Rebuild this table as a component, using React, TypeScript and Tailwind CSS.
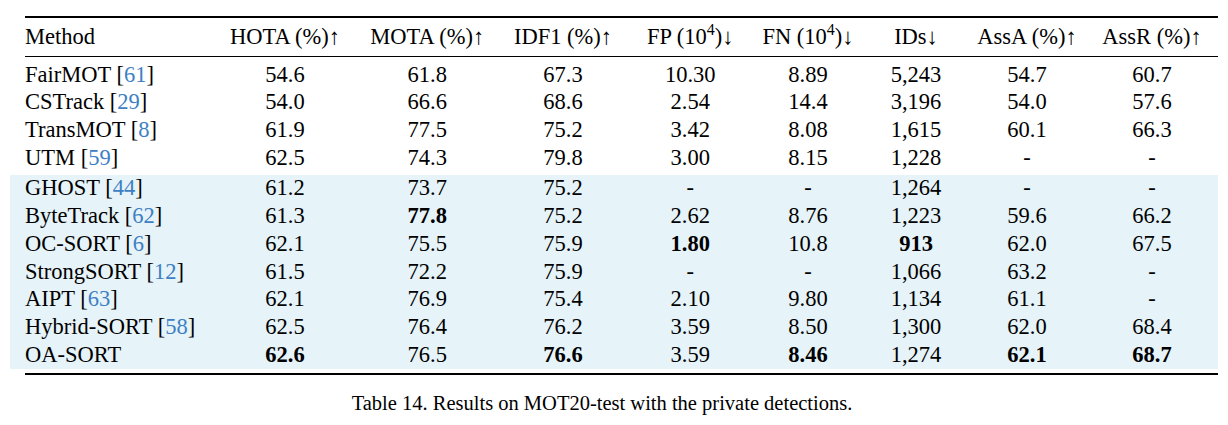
const COLS = "grid grid-cols-[188px_144px_140.5px_131px_123.5px_112px_104px_118px_132px] items-center";

type Cell = string | { v: string; b: true };
type Row = { name: string; ref?: string; cells: Cell[] };

const TOP: Row[] = [
  { name: "FairMOT", ref: "61", cells: ["54.6", "61.8", "67.3", "10.30", "8.89", "5,243", "54.7", "60.7"] },
  { name: "CSTrack", ref: "29", cells: ["54.0", "66.6", "68.6", "2.54", "14.4", "3,196", "54.0", "57.6"] },
  { name: "TransMOT", ref: "8", cells: ["61.9", "77.5", "75.2", "3.42", "8.08", "1,615", "60.1", "66.3"] },
  { name: "UTM", ref: "59", cells: ["62.5", "74.3", "79.8", "3.00", "8.15", "1,228", "-", "-"] },
];

const b = (v: string): Cell => ({ v, b: true });

const BLUE: Row[] = [
  { name: "GHOST", ref: "44", cells: ["61.2", "73.7", "75.2", "-", "-", "1,264", "-", "-"] },
  { name: "ByteTrack", ref: "62", cells: ["61.3", b("77.8"), "75.2", "2.62", "8.76", "1,223", "59.6", "66.2"] },
  { name: "OC-SORT", ref: "6", cells: ["62.1", "75.5", "75.9", b("1.80"), "10.8", b("913"), "62.0", "67.5"] },
  { name: "StrongSORT", ref: "12", cells: ["61.5", "72.2", "75.9", "-", "-", "1,066", "63.2", "-"] },
  { name: "AIPT", ref: "63", cells: ["62.1", "76.9", "75.4", "2.10", "9.80", "1,134", "61.1", "-"] },
  { name: "Hybrid-SORT", ref: "58", cells: ["62.5", "76.4", "76.2", "3.59", "8.50", "1,300", "62.0", "68.4"] },
  { name: "OA-SORT", cells: [b("62.6"), "76.5", b("76.6"), "3.59", b("8.46"), "1,274", b("62.1"), b("68.7")] },
];

function DataRow({ row }: { row: Row }) {
  return (
    <div className={`${COLS} h-[27.7px]`}>
      <div className="whitespace-nowrap">
        {row.name}
        {row.ref && (
          <>
            {" "}[<span className="text-[#3d80c3]">{row.ref}</span>]
          </>
        )}
      </div>
      {row.cells.map((c, i) =>
        typeof c === "string" ? (
          <div key={i} className="text-center">{c}</div>
        ) : (
          <div key={i} className="text-center font-bold">{c.v}</div>
        )
      )}
    </div>
  );
}

const Sup = () => <sup className="text-[16px] -top-[9px]">4</sup>;

const HEADS = [
  <>HOTA (%)↑</>,
  <>MOTA (%)↑</>,
  <>IDF1 (%)↑</>,
  <>FP (10<Sup />)↓</>,
  <>FN (10<Sup />)↓</>,
  <>IDs↓</>,
  <>AssA (%)↑</>,
  <>AssR (%)↑</>,
];

export default function App() {
  return (
    <div className="w-[1228px] h-[425px] bg-white text-black font-['Liberation_Serif',serif] text-[22.5px] leading-none">
      <div className="pt-4 pr-[10px]">
        <div className="ml-[25px] h-[1.6px] bg-black" />
        <div className={`${COLS} ml-[25px] h-[38.5px] whitespace-nowrap`}>
          <div>Method</div>
          {HEADS.map((h, i) => (
            <div key={i} className="text-center">{h}</div>
          ))}
        </div>
        <div className="ml-[25px] h-[1px] bg-black" />
        <div className="ml-[25px] pt-[4px] pb-[3px]">
          {TOP.map((r) => (
            <DataRow key={r.name} row={r} />
          ))}
        </div>
        <div className="ml-[10px] pl-[15px] bg-[#e6f3f9]">
          {BLUE.map((r) => (
            <DataRow key={r.name} row={r} />
          ))}
        </div>
        <div className="ml-[25px] mt-[4px] h-[2px] bg-black" />
      </div>
      <div className="mt-[18px] pr-[24px] text-center text-[20.5px]">
        Table 14. Results on MOT20-test with the private detections.
      </div>
    </div>
  );
}
